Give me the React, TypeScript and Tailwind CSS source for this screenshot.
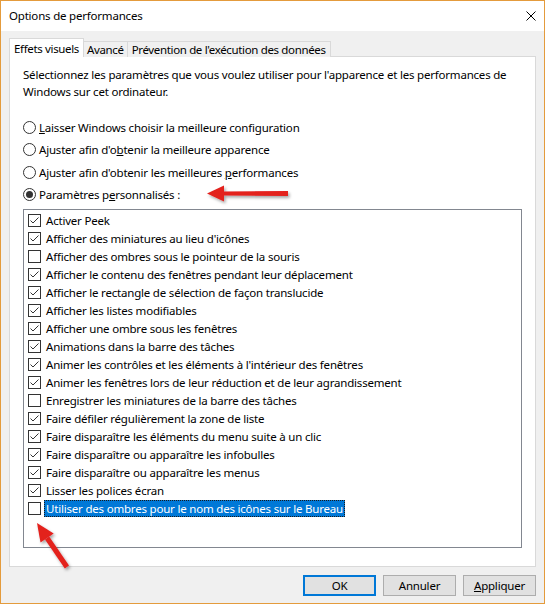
import React from "react";

const items: [string, boolean][] = [
  ["Activer Peek", true],
  ["Afficher des miniatures au lieu d'icônes", true],
  ["Afficher des ombres sous le pointeur de la souris", false],
  ["Afficher le contenu des fenêtres pendant leur déplacement", true],
  ["Afficher le rectangle de sélection de façon translucide", true],
  ["Afficher les listes modifiables", true],
  ["Afficher une ombre sous les fenêtres", true],
  ["Animations dans la barre des tâches", true],
  ["Animer les contrôles et les éléments à l'intérieur des fenêtres", true],
  ["Animer les fenêtres lors de leur réduction et de leur agrandissement", true],
  ["Enregistrer les miniatures de la barre des tâches", false],
  ["Faire défiler régulièrement la zone de liste", true],
  ["Faire disparaître les éléments du menu suite à un clic", true],
  ["Faire disparaître ou apparaître les infobulles", true],
  ["Faire disparaître ou apparaître les menus", true],
  ["Lisser les polices écran", true],
];

function Check({ checked }: { checked: boolean }) {
  return (
    <span className="w-[13px] h-[13px] border border-[#333333] bg-white flex items-center justify-center shrink-0">
      {checked && (
        <svg width="11" height="11" viewBox="0 0 11 11">
          <path d="M1.5 5.5 L4 8 L9.5 2.5" fill="none" stroke="#333333" strokeWidth="1" />
        </svg>
      )}
    </span>
  );
}

function Radio({ selected, children }: { selected?: boolean; children: React.ReactNode }) {
  return (
    <div className="h-[22.5px] flex items-center gap-[3px]">
      <span className="w-[13px] h-[13px] rounded-full border border-[#333333] bg-white flex items-center justify-center shrink-0">
        {selected && <span className="w-[7px] h-[7px] rounded-full bg-[#333333]" />}
      </span>
      <span>{children}</span>
    </div>
  );
}

export default function App() {
  return (
    <div className="relative w-[545px] h-[604px] border border-[#e49b3c] bg-[#f0f0f0] flex flex-col font-['Noto_Sans','DejaVu_Sans',sans-serif] text-[11.5px] tracking-[-0.2px] text-black leading-[17px]">
      <div className="h-[30px] bg-white flex items-center justify-between pl-[8px] pr-[8px] shrink-0">
        <span className="-mt-px">Options de performances</span>
        <svg width="10" height="10" viewBox="0 0 10 10" className="-mt-px">
          <path d="M0.5 0.5 L9.5 9.5 M9.5 0.5 L0.5 9.5" stroke="#000" strokeWidth="1" fill="none" />
        </svg>
      </div>
      <div className="flex-1 flex flex-col px-[8px] pt-[7px]">
        <div className="flex items-start h-[19px] relative z-10 -mb-px tracking-[-0.35px]">
          <div className="shrink-0 w-[75px] h-[19px] bg-white border border-b-0 border-[#d9d9d9] flex items-center justify-center whitespace-nowrap">
            Effets visuels
          </div>
          <div className="shrink-0 mt-[3px] px-[3px] h-[16px] bg-[#f0f0f0] border border-l-0 border-b-0 border-[#d9d9d9] flex items-center justify-center whitespace-nowrap">
            Avancé
          </div>
          <div className="shrink-0 mt-[3px] px-[4px] h-[16px] bg-[#f0f0f0] border border-l-0 border-b-0 border-[#d9d9d9] flex items-center justify-center whitespace-nowrap">
            Prévention de l'exécution des données
          </div>
        </div>
        <div className="h-[511px] bg-white border border-[#d9d9d9] flex flex-col px-[13px] pt-[9px]">
          <p className="whitespace-nowrap">
            Sélectionnez les paramètres que vous voulez utiliser pour l'apparence et les performances de
            <br />
            Windows sur cet ordinateur.
          </p>
          <div className="mt-[16px] flex flex-col">
            <Radio>
              <span className="underline">L</span>aisser Windows choisir la meilleure configuration
            </Radio>
            <Radio>
              Ajuster afin d'o<span className="underline">b</span>tenir la meilleure apparence
            </Radio>
            <Radio>
              Ajuster afin d'obtenir les meilleures <span className="underline">p</span>erformances
            </Radio>
            <Radio selected>
              Paramètres p<span className="underline">e</span>rsonnalisés :
            </Radio>
          </div>
          <div className="mt-[3px] h-[339px] border border-[#828790] bg-white flex flex-col pl-[4px] pt-[1px]">
            {items.map(([label, checked]) => (
              <div key={label} className="h-[18px] flex items-center gap-[3px] whitespace-nowrap">
                <Check checked={checked} />
                <span className="px-[2px]">{label}</span>
              </div>
            ))}
            <div className="h-[18px] flex items-center gap-[3px] whitespace-nowrap">
              <Check checked={false} />
              <span className="px-[1px] h-[17px] flex items-center bg-[#0078d7] text-white border border-dotted border-[#1a1a1a]">
                Utiliser des ombres pour le nom des icônes sur le Bureau
              </span>
            </div>
          </div>
        </div>
        <div className="flex justify-end gap-[7px] mt-[8px]">
          <button className="w-[73px] h-[21px] bg-[#e1e1e1] border-2 border-[#0078d7] flex items-center justify-center">
            OK
          </button>
          <button className="w-[73px] h-[21px] bg-[#e1e1e1] border border-[#adadad] flex items-center justify-center">
            Annuler
          </button>
          <button className="w-[73px] h-[21px] bg-[#e1e1e1] border border-[#adadad] flex items-center justify-center">
            <span>
              <span className="underline">A</span>ppliquer
            </span>
          </button>
        </div>
      </div>
      <svg className="absolute left-[-1px] top-[-1px] pointer-events-none" width="545" height="604" viewBox="0 0 545 604">
        <defs>
          <filter id="sh" x="-20%" y="-20%" width="140%" height="140%">
            <feDropShadow dx="1.5" dy="2" stdDeviation="1.5" floodColor="#000" floodOpacity="0.35" />
          </filter>
        </defs>
        <g filter="url(#sh)" fill="#e3201f" stroke="none">
          <path d="M288 191 L222 191.5 L222 195.5 L288 196 Z" />
          <path d="M207 193.5 L224 185.5 L224 201.5 Z" />
          <path d="M69 565.5 L64.8 568.5 L45 539.5 L49.2 536.5 Z" />
          <path d="M37 523 L53.7 533.4 L40.5 542.4 Z" />
        </g>
      </svg>
    </div>
  );
}
